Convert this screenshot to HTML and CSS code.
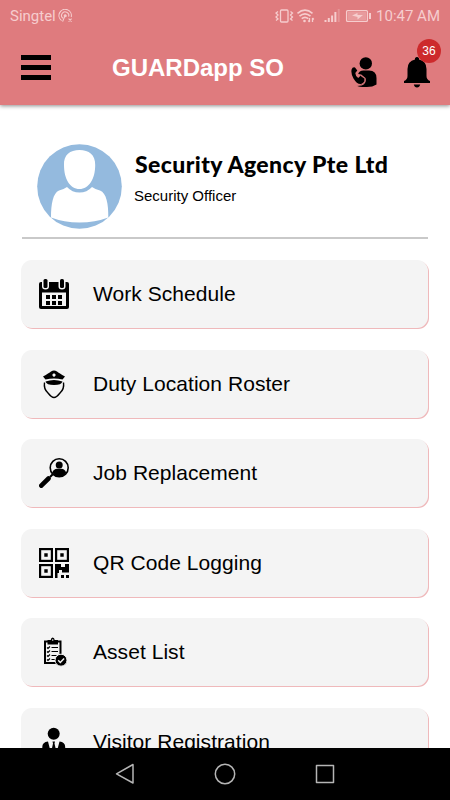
FILE: index.html
```html
<!DOCTYPE html>
<html lang="en">
<head>
    <meta charset="UTF-8">
    <meta name="viewport" content="width=device-width, initial-scale=1.0">
    <title>GUARDapp SO</title>
    <link rel="stylesheet" href="styles.css">
</head>
<body>
    <header class="header">
        <div class="status-bar">
            <span class="carrier">Singtel</span>
            <svg class="hotspot" width="15" height="14" viewBox="0 0 15 14" fill="none" stroke="currentColor" stroke-width="1.1">
                <path d="M3.6 11.6A6.2 6.2 0 1 1 13.2 8"/>
                <path d="M5 9.3A3.6 3.6 0 1 1 10.6 7.6"/>
                <circle cx="7.2" cy="6.8" r="1" fill="currentColor"/>
                <path d="M6.9 7L4.6 12.6M10.6 9.6l3 3M13.6 9.6l-3 3"/>
            </svg>
            <svg class="signals" width="98" height="16" viewBox="0 0 98 16" fill="none" stroke="currentColor" stroke-width="1.3">
                <!-- vibrate -->
                <rect x="5.5" y="2" width="7.5" height="12" rx="1"/>
                <path d="M3 3.5L1 5l2 2-2 2 2 2-2 1.5M15.5 3.5l2 1.5-2 2 2 2-2 2 2 1.500"/>
                <!-- wifi -->
                <path d="M22.500 5.300Q30-1 37.500 5.300M24.500 8.200Q30 3.500 35.500 8.200M26.700 10.700Q30 8 33.300 10.700" stroke-width="1.600"/>
                <circle cx="29.500" cy="13" r="1.300" fill="currentColor" stroke="none"/>
                <path d="M34.500 10v4M33.200 12.500l1.300 1.500M37.500 14v-4M38.800 11.500L37.500 10"/>
                <!-- mobile signal -->
                <path d="M50.500 14v-2M53.800 14v-4M57.100 14V7.500M60.400 14V4" stroke-width="2"/>
                <path d="M63.700 14V1" stroke-width="2" opacity=".3"/>
                <!-- battery -->
                <rect x="71.600" y="2.600" width="20.800" height="10.800" rx="1"/>
                <rect x="73" y="4" width="18" height="8" fill="currentColor" stroke="none" opacity=".4"/>
                <path d="M77 7.500l5.500-2.500v2H88l-5.500 4.500V9z" fill="currentColor" stroke="none"/>
                <path d="M95 5v6" stroke-width="2"/>
            </svg>
            <span class="clock">10:47 AM</span>
        </div>
        <div class="app-bar">
            <button class="menu-button" aria-label="Menu">
                <span></span>
                <span></span>
                <span></span>
            </button>
            <h1>GUARDapp SO</h1>
            <svg class="call-icon" width="26" height="31" viewBox="0 0 26 31">
                <circle cx="14.800" cy="6.400" r="6.200"/>
                <path d="M7 17.500Q8 13.600 12.500 13.600H18Q25.500 14 25.500 21v6.500Q21 30.500 14 30Q8 30 5.500 28.500Q14 28 14 23Q11 18 7 17.500z"/>
                <path d="M.6 12.500Q1.500 9.800 4 10.500L6.300 13.600L4.300 16Q4.500 19.300 7.200 21L9.500 18.700L13.300 21.500Q14.500 25.500 10 27Q6 27.500 2.500 21.500Q-.3 16.500.6 12.500z"/>
                <path d="M7 17.700L10 18L14 21.300Q15.500 26 10.500 28L5 28.300" fill="none" stroke="#df7b7e" stroke-width="1.200"/>
            </svg>
            <div class="bell">
                <svg width="26" height="31" viewBox="0 0 26 31">
                    <path d="M13 0a2 2 0 0 1 2 2.500Q22.500 4 22.500 12v7q0 3.500 3.500 5v2H0v-2q3.500-1.500 3.500-5v-7Q3.500 4 11 2.500A2 2 0 0 1 13 0zM9.800 27.500h6.400Q15.500 30.500 13 30.500T9.800 27.500z"/>
                </svg>
                <span class="badge">36</span>
            </div>
        </div>
    </header>

    <main class="content">
        <section class="profile">
            <svg class="avatar" width="85" height="85" viewBox="0 0 85 85">
                <circle cx="42.500" cy="42.500" r="42.300" fill="#94bade"/>
                <path d="M42.500 6C52 6 58.500 11 58.200 21C58.200 35 52 45 42.500 45S27 35 27 21C26.500 11 33 6 42.500 6z" fill="#fff"/>
                <path d="M30 43Q35 48.500 42.500 48.500T55 43Q58 45 63 46.500C69.500 49 71.500 60 71.300 73.500Q58 78.500 42.500 78.500T14 73.500C14 60 16 49 22 46.500Q27 45 30 43z" fill="#fff"/>
            </svg>
            <div class="profile-text">
                <h2>Security Agency Pte Ltd</h2>
                <p>Security Officer</p>
            </div>
        </section>

        <nav class="menu">
            <a class="menu-item">
                <svg width="30" height="30" viewBox="0 0 30 30">
                    <path d="M2 3h26q2 0 2 2v23q0 2-2 2H2q-2 0-2-2V5q0-2 2-2z"/>
                    <path d="M3 13.500h24V27H3zM3 0h7v7.500q0 3-3.500 3T3 7.500zM19.500 0h7v7.500q0 3-3.500 3t-3.500-3z" fill="#f4f4f4"/>
                    <rect x="4.500" y="0" width="4" height="9" rx="1.500"/>
                    <rect x="21" y="0" width="4" height="9" rx="1.500"/>
                    <path d="M7 16h4v4H7zM13 16h4v4h-4zM19 16h4v4h-4zM7 22h4v4H7zM13 22h4v4h-4zM19 22h4v4h-4z"/>
                </svg>
                <span>Work Schedule</span>
            </a>
            <a class="menu-item">
                <svg width="30" height="30" viewBox="0 0 30 30">
                    <path d="M4 7.500Q10 4 12 2.500Q15 .500 18 2.500Q20 4 26 7.500L23.500 10.500Q15 8.500 6.500 10.500z"/>
                    <path d="M15 4.200l1.500 1v1.600L15 8l-1.500-1.200V5.200z" fill="#f4f4f4"/>
                    <path d="M6.500 12.500Q15 9.500 23.500 12.500Q22.500 16 15 16T6.500 12.500z"/>
                    <path d="M5.500 13.500Q4.500 20 9 24Q12.500 28.500 15 28.500T21 24Q25.500 20 24.500 13.500" fill="none" stroke="#000" stroke-width="1.400"/>
                </svg>
                <span>Duty Location Roster</span>
            </a>
            <a class="menu-item">
                <svg width="30" height="30" viewBox="0 0 30 30">
                    <circle cx="20.200" cy="9.800" r="9" fill="none" stroke="#000" stroke-width="1.600"/>
                    <circle cx="20.200" cy="7" r="3.500"/>
                    <path d="M13.200 14.500Q15 10.800 18 10.800h4.500Q25.500 10.800 27.200 14.500Q24 18.800 20.200 18.800T13.200 14.500z"/>
                    <path d="M13.800 16.200L11 19" stroke="#000" stroke-width="2"/>
                    <path d="M9.500 20.500L2.300 27.700" stroke="#000" stroke-width="4.600" stroke-linecap="round"/>
                </svg>
                <span>Job Replacement</span>
            </a>
            <a class="menu-item">
                <svg width="30" height="30" viewBox="0 0 30 30">
                    <g fill="none" stroke="#000" stroke-width="2.200">
                        <rect x="1.100" y="1.100" width="11.800" height="11.800"/>
                        <rect x="17.100" y="1.100" width="11.800" height="11.800"/>
                        <rect x="1.100" y="17.100" width="11.800" height="11.800"/>
                    </g>
                    <path d="M5.300 5.300h3.400v3.400H5.300zM21.300 5.300h3.400v3.400h-3.400zM5.300 21.300h3.400v3.400H5.300z"/>
                    <path d="M16 16h6v3h4v-3h4v8.500h-7V22h-3v3h-1.500v5H16zM22 27h3v3h-3zM27 27h3v3h-3z"/>
                </svg>
                <span>QR Code Logging</span>
            </a>
            <a class="menu-item">
                <svg width="30" height="30" viewBox="0 0 30 30">
                    <path d="M6 4.500h15.500V26H6z" fill="none" stroke="#000" stroke-width="2"/>
                    <path d="M8.500 3h3.200Q12 .500 13.700.500T15.700 3h3.300v4.500H8.500z"/>
                    <circle cx="13.700" cy="3" r=".8" fill="#f4f4f4"/>
                    <path d="M8 10.500l1 1 2-2M8 14.500l1 1 2-2M8 18.500l1 1 2-2M8 22.500l1 1 2-2M12.500 10.500h6.500M12.500 14.500h6.500M12.500 18.500h5M12.500 22.500h3.500" fill="none" stroke="#000" stroke-width="1.100"/>
                    <circle cx="22" cy="23.200" r="6" stroke="#f4f4f4"/>
                    <path d="M19.200 23.200l2.100 2.200 3.800-4" fill="none" stroke="#f4f4f4" stroke-width="1.500"/>
                </svg>
                <span>Asset List</span>
            </a>
            <a class="menu-item">
                <svg width="30" height="30" viewBox="0 0 30 30">
                    <circle cx="14.700" cy="6.700" r="6"/>
                    <path d="M3.300 30V20Q3.300 15 9 14.500L13 30zM26.200 30V20Q26.200 15 20.500 14.500L16.500 30zM13.500 14.500H16l-.5 2L17 23l-2.200 4-2.200-4L14 16.500z"/>
                </svg>
                <span>Visitor Registration</span>
            </a>
        </nav>
    </main>

    <footer class="system-nav">
        <svg width="20" height="22" viewBox="0 0 20 22"><path d="M18 1.500v18.500L1.500 10.800z"/></svg>
        <svg width="22" height="22" viewBox="0 0 22 22"><circle cx="11" cy="11" r="9.700"/></svg>
        <svg width="20" height="22" viewBox="0 0 20 22"><rect x="1.500" y="2.500" width="17" height="17"/></svg>
    </footer>
</body>
</html>
```
FILE: styles.css
```css
* {
    box-sizing: border-box;
}

body {
    display: flex;
    flex-direction: column;
    height: 100vh;
    margin: 0;
    background: #fff;
    color: #000;
    font-family: "Liberation Sans", Arial, sans-serif;
    overflow: hidden;
}

h1, h2, p {
    margin: 0;
    white-space: nowrap;
}

/* Header */
.header {
    flex: none;
    height: 105px;
    background: #df7b7e;
    box-shadow: 0 1px 4px rgba(0, 0, 0, 0.45);
    z-index: 1;
}

.status-bar {
    display: flex;
    align-items: center;
    height: 32px;
    padding: 0 10px;
    color: #f6cdce;
    font-family: Roboto, sans-serif;
    font-size: 15px;
}

.hotspot {
    margin-left: 2px;
}

.signals {
    margin-left: auto;
    margin-right: 3px;
}

.app-bar {
    display: flex;
    align-items: center;
    height: 71px;
    padding: 0 20px 0 21px;
}

.menu-button {
    display: flex;
    flex-direction: column;
    gap: 5px;
    width: 30px;
    padding: 0;
    border: none;
    background: none;
}

.menu-button span {
    height: 5px;
    background: #000;
}

h1 {
    margin-left: 61px;
    color: #fff;
    font-size: 24px;
    line-height: 28px;
}

.call-icon {
    margin-left: auto;
    margin-top: 9px;
}

.bell {
    position: relative;
    height: 31px;
    margin-left: 27px;
    margin-top: 9px;
}

.badge {
    position: absolute;
    top: -18px;
    right: -11px;
    width: 24px;
    height: 24px;
    border-radius: 50%;
    background: #cd2a2c;
    color: #fff;
    font-size: 12px;
    line-height: 24px;
    text-align: center;
}

/* Content */
.content {
    flex: 1;
    min-height: 0;
    padding: 0 21px;
    overflow: hidden;
}

.profile {
    display: flex;
    height: 134px;
    margin: 0 1px;
    padding: 39px 0 0 15px;
    border-bottom: 2px solid #c9c9c9;
}

.profile-text {
    margin-left: 12px;
    padding-top: 6px;
}

h2 {
    margin-left: 1px;
    font-family: Lato, sans-serif;
    font-size: 23px;
    font-weight: 900;
    letter-spacing: 0.4px;
    line-height: 28px;
}

.profile-text p {
    margin-top: 9px;
    font-size: 15px;
    line-height: 18px;
}

.menu {
    display: flex;
    flex-direction: column;
    gap: 21.6px;
    margin-top: 21px;
}

.menu-item {
    display: flex;
    align-items: center;
    gap: 24px;
    flex: none;
    height: 68px;
    margin-right: 1px;
    padding: 0 18px;
    border-radius: 11px;
    background: #f4f4f4;
    box-shadow: 1px 1px 0 #efb9bb;
    font-size: 21px;
    letter-spacing: 0.05px;
    white-space: nowrap;
}

/* Android navigation bar */
.system-nav {
    display: flex;
    flex: none;
    align-items: center;
    justify-content: center;
    gap: 79px;
    height: 52px;
    background: #000;
    z-index: 1;
}

.system-nav svg {
    fill: none;
    stroke: #b5b5b5;
    stroke-width: 1.5;
    stroke-linejoin: round;
}
```
